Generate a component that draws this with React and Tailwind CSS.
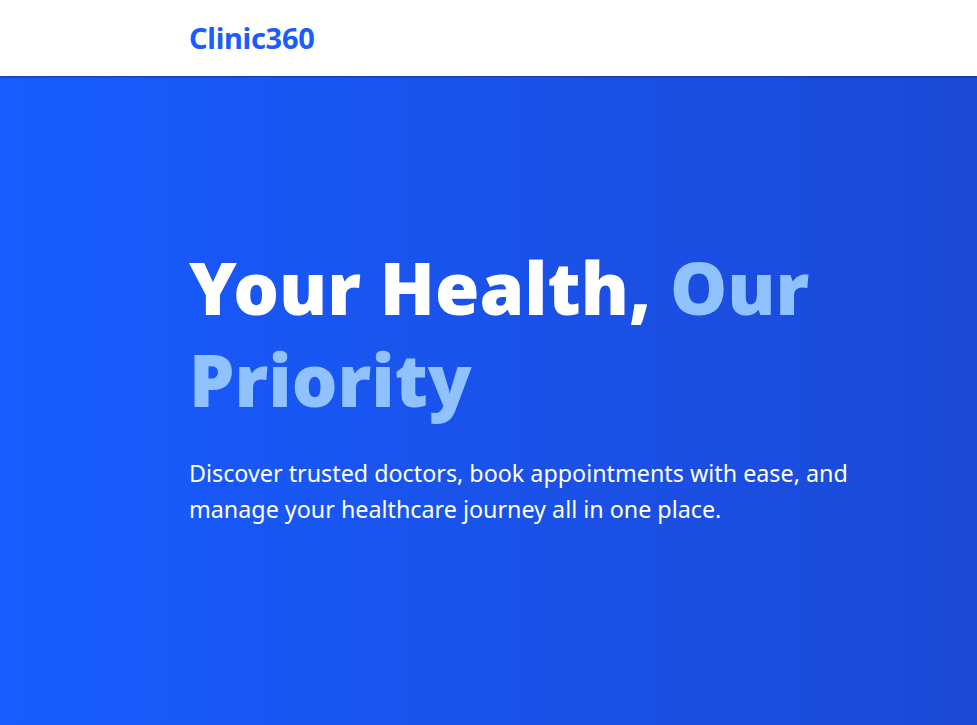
export default function App() {
  return (
    <div className="min-h-screen bg-white" style={{ fontFamily: '"Noto Sans", "Open Sans", sans-serif' }}>
      <header className="relative z-10 h-[76px] bg-white shadow-[0_1px_2px_rgba(0,0,0,0.35)] flex items-center">
        <div className="pl-[189px]">
          <span className="text-[29px] font-bold text-[#1a5cff] tracking-[-0.3px]">Clinic360</span>
        </div>
      </header>
      <section className="min-h-[649px] bg-gradient-to-r from-[#175cff] to-[#1b49d6]">
        <div className="pl-[189px] pt-[165px] pr-[100px]">
          <h1 className="text-[72px] leading-[92px] font-black text-white tracking-[0px] max-w-[690px]">
            Your Health, <span className="text-[#8fc2ff]">Our Priority</span>
          </h1>
          <p className="mt-[30px] text-[23.3px] leading-[36px] text-white max-w-[680px]">
            Discover trusted doctors, book appointments with ease, and manage your healthcare journey all in one place.
          </p>
        </div>
      </section>
    </div>
  );
}
